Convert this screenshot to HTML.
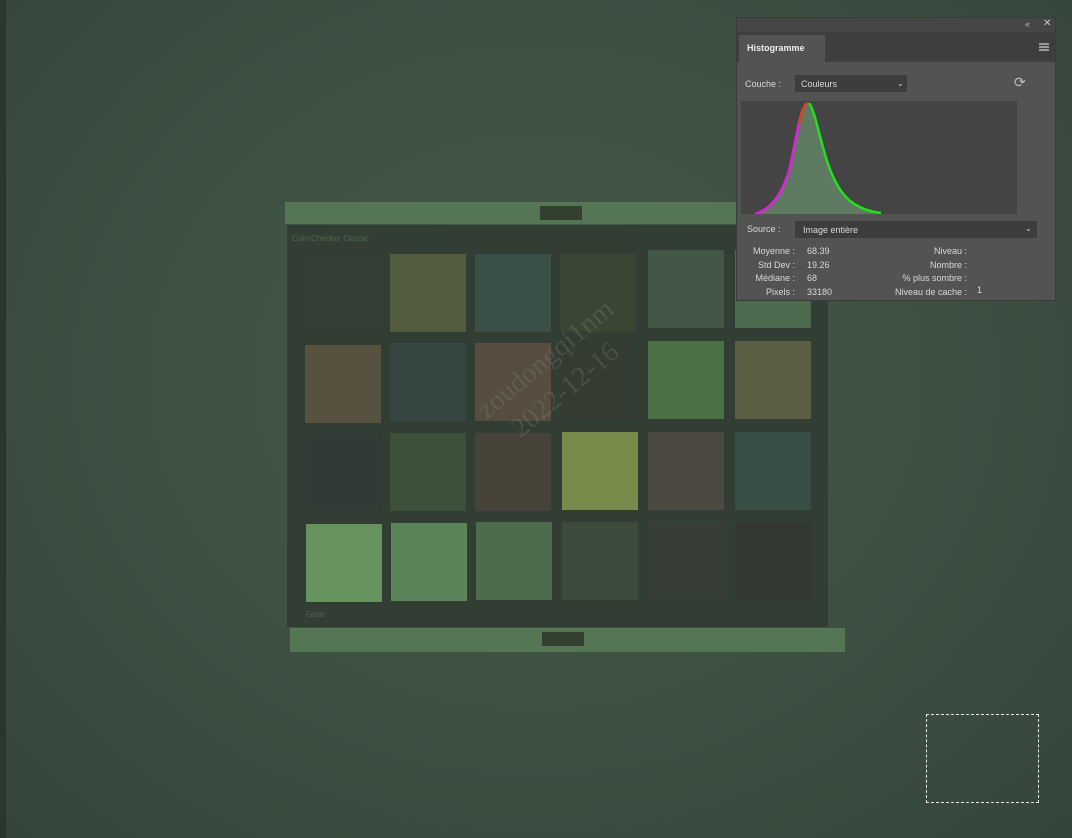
<!DOCTYPE html>
<html><head><meta charset="utf-8"><style>
*{margin:0;padding:0;box-sizing:border-box}
body{width:1072px;height:838px;overflow:hidden;background:#3d4f40;font-family:"Liberation Sans",sans-serif;position:relative}
.bg{position:absolute;inset:0;background:radial-gradient(ellipse at 50% 45%,#44584a 0%,#3d5042 55%,#34463a 100%)}
.abs{position:absolute}
.p{position:absolute;width:76px;height:78px}
.panel{left:736px;top:17px;width:320px;height:284px;background:#535353;border:1px solid #3a3a3a}
.t{position:absolute;font-size:9px;color:#d8d8d8;white-space:nowrap}
</style></head><body>
<div class="bg"></div>
<div class="abs" style="left:0;top:0;width:6px;height:838px;background:#2a3530"></div>
<div class="abs" style="left:285px;top:202px;width:455px;height:22px;background:#557654"></div>
<div class="abs" style="left:540px;top:206px;width:42px;height:14px;background:#34402f"></div>
<div class="abs" style="left:287px;top:225px;width:541px;height:402px;background:#323d33"></div>
<div class="abs" style="left:292px;top:234px;font-size:8px;color:#4d6a4d">ColorChecker Classic</div>
<div class="abs" style="left:306px;top:610px;font-size:8px;color:#4d6a4d">Grids</div>
<div class="abs" style="left:290px;top:628px;width:555px;height:24px;background:#557654"></div>
<div class="abs" style="left:542px;top:632px;width:42px;height:14px;background:#34402f"></div>

<div class="p" style="left:305px;top:253px;background:#353e34"></div>
<div class="p" style="left:390px;top:254px;background:#525d40"></div>
<div class="p" style="left:475px;top:254px;background:#3b5047"></div>
<div class="p" style="left:560px;top:254px;background:#3a4634"></div>
<div class="p" style="left:648px;top:250px;background:#435747"></div>
<div class="p" style="left:735px;top:250px;background:#4b6a4e"></div>

<div class="p" style="left:305px;top:345px;background:#575240"></div>
<div class="p" style="left:390px;top:343px;background:#354540"></div>
<div class="p" style="left:475px;top:343px;background:#564d3f"></div>
<div class="p" style="left:560px;top:343px;background:#343b31"></div>
<div class="p" style="left:648px;top:341px;background:#4c6f45"></div>
<div class="p" style="left:735px;top:341px;background:#5a5e42"></div>

<div class="p" style="left:305px;top:433px;background:#303b38"></div>
<div class="p" style="left:390px;top:433px;background:#3b5139"></div>
<div class="p" style="left:475px;top:433px;background:#484338"></div>
<div class="p" style="left:562px;top:432px;background:#778c4a"></div>
<div class="p" style="left:648px;top:432px;background:#4c4940"></div>
<div class="p" style="left:735px;top:432px;background:#384e47"></div>

<div class="p" style="left:306px;top:524px;background:#67935f"></div>
<div class="p" style="left:391px;top:523px;background:#5c845b"></div>
<div class="p" style="left:476px;top:522px;background:#4d6c4e"></div>
<div class="p" style="left:562px;top:522px;background:#3b4a3b"></div>
<div class="p" style="left:648px;top:522px;background:#363e35"></div>
<div class="p" style="left:735px;top:522px;background:#343832"></div>

<div class="abs" style="left:470px;top:400px;transform:rotate(-40deg);transform-origin:left top;font-family:'Liberation Serif',serif;font-size:28px;color:rgba(140,140,130,0.25);line-height:36px">zoudongqi1nm<br>&nbsp;&nbsp;2022-12-16</div>

<div class="abs" style="left:926px;top:714px;width:113px;height:89px;border:1px dashed #e8e8e8"></div>

<div class="abs panel">
 <div class="abs" style="left:0;top:0;width:318px;height:14px;background:#464646"></div>
 <div class="t" style="left:288px;top:1px;color:#bbb">«</div>
 <div class="t" style="left:306px;top:0px;font-size:10px;color:#ccc">✕</div>
 <div class="abs" style="left:0;top:14px;width:318px;height:30px;background:#3e3e3e"></div>
 <div class="abs" style="left:2px;top:17px;width:86px;height:27px;background:#535353"></div>
 <div class="t" style="left:10px;top:25px;font-weight:bold;color:#eee">Histogramme</div>
 <div class="abs" style="left:302px;top:25px;width:10px;height:8px;border-top:2px solid #999;border-bottom:2px solid #999"><div style="margin-top:1px;height:2px;background:#999"></div></div>
 <div class="t" style="left:8px;top:61px">Couche :</div>
 <div class="abs" style="left:58px;top:57px;width:112px;height:17px;background:#3d3d3d"></div>
 <div class="t" style="left:64px;top:61px">Couleurs</div>
 <div class="t" style="left:160px;top:61px;font-size:8px">⌄</div>
 <div class="t" style="left:277px;top:56px;font-size:14px;color:#bbb">⟳</div>
 <div class="abs" style="left:4px;top:83px;width:276px;height:113px;background:#444"></div>
 <svg class="abs" style="left:4px;top:83px" width="276" height="113" viewBox="0 0 276 113">
  <path d="M14 113 C30 108 40 95 48 70 C56 40 60 5 66 2 C72 0 76 30 86 60 C96 90 108 108 140 113 Z" fill="#5e7a60"/>
  <path d="M14 113 C30 108 40 95 48 70 C54 45 57 20 62 8" fill="none" stroke="#e020e0" stroke-width="2.5"/>
  <path d="M58 22 C61 10 63 4 66 2" fill="none" stroke="#e04020" stroke-width="2.5"/>
  <path d="M68 2 C74 10 78 35 86 60 C96 90 108 108 140 112" fill="none" stroke="#20e020" stroke-width="2.5"/>
 </svg>
 <div class="t" style="left:10px;top:206px">Source :</div>
 <div class="abs" style="left:58px;top:203px;width:242px;height:17px;background:#3d3d3d"></div>
 <div class="t" style="left:66px;top:207px">Image entière</div>
 <div class="t" style="left:288px;top:206px;font-size:8px">⌄</div>
 <div class="t" style="left:10px;top:227px;line-height:13.5px;text-align:right;width:48px">Moyenne :<br>Std Dev :<br>Médiane :<br>Pixels :</div>
 <div class="t" style="left:70px;top:227px;line-height:13.5px">68.39<br>19.26<br>68<br>33180</div>
 <div class="t" style="left:130px;top:227px;line-height:13.5px;text-align:right;width:100px">Niveau :<br>Nombre :<br>% plus sombre :<br>Niveau de cache :</div>
 <div class="t" style="left:240px;top:267px">1</div>
</div>
</body></html>
